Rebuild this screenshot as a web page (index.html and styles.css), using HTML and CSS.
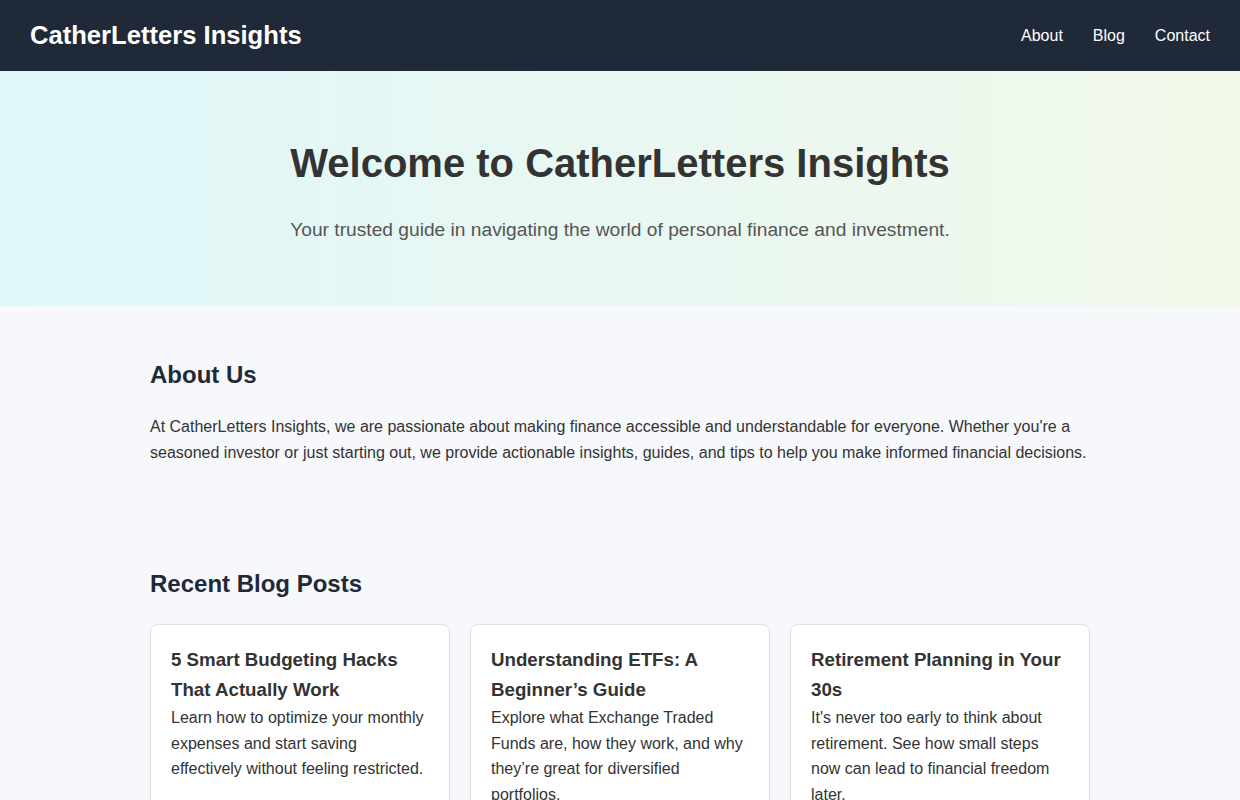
FILE: index.html
```html
<!DOCTYPE html>
<html lang="en">
<head>
<meta charset="utf-8">
<title>CatherLetters Insights</title>
<link rel="stylesheet" href="styles.css">
</head>
<body>
<header class="site-header">
  <div class="logo">CatherLetters Insights</div>
  <nav class="nav">
    <a href="#about">About</a>
    <a href="#blog">Blog</a>
    <a href="#contact">Contact</a>
  </nav>
</header>
<section class="hero">
  <h1>Welcome to CatherLetters Insights</h1>
  <p>Your trusted guide in navigating the world of personal finance and investment.</p>
</section>
<main class="container">
  <section class="about" id="about">
    <h2>About Us</h2>
    <p>At CatherLetters Insights, we are passionate about making finance accessible and understandable for everyone. Whether you're a seasoned investor or just starting out, we provide actionable insights, guides, and tips to help you make informed financial decisions.</p>
  </section>
  <section class="blog" id="blog">
    <h2>Recent Blog Posts</h2>
    <div class="cards">
      <article class="card">
        <h3>5 Smart Budgeting Hacks That Actually Work</h3>
        <p>Learn how to optimize your monthly expenses and start saving effectively without feeling restricted.</p>
      </article>
      <article class="card">
        <h3>Understanding ETFs: A Beginner’s Guide</h3>
        <p>Explore what Exchange Traded Funds are, how they work, and why they’re great for diversified portfolios.</p>
      </article>
      <article class="card">
        <h3>Retirement Planning in Your 30s</h3>
        <p>It's never too early to think about retirement. See how small steps now can lead to financial freedom later.</p>
      </article>
    </div>
  </section>
</main>
</body>
</html>
```
FILE: styles.css
```css
* { box-sizing: border-box; }
body {
  margin: 0;
  font-family: "Liberation Sans", Arial, sans-serif;
  font-size: 16px;
  line-height: 1.6;
  color: #333;
  background: #f7f8fb;
}
.site-header {
  height: 71px;
  background: #1f2937;
  display: flex;
  align-items: center;
  justify-content: space-between;
  padding: 0 30px;
}
.logo {
  color: #fff;
  font-size: 25.6px;
  font-weight: bold;
}
.nav {
  display: flex;
  gap: 30px;
}
.nav a {
  color: #fff;
  text-decoration: none;
  font-size: 16px;
}
.hero {
  height: 235px;
  background: linear-gradient(90deg, #e0f7fa, #f1f8e9);
  text-align: center;
  padding-top: 69px;
}
.hero h1 {
  margin: 0;
  font-size: 40px;
  line-height: 46px;
  color: #333;
}
.hero p {
  margin: 32px 0 0;
  font-size: 19.2px;
  line-height: 23px;
  color: #555;
}
.container {
  width: 940px;
  margin: 0 auto;
}
.about {
  padding-top: 55px;
}
h2 {
  margin: 0;
  font-size: 24px;
  line-height: 28px;
  color: #1f2937;
}
.about p {
  margin: 25px 0 0;
  line-height: 26px;
}
.blog {
  padding-top: 104px;
}
.cards {
  margin-top: 26px;
  display: grid;
  grid-template-columns: repeat(3, 1fr);
  gap: 20px;
}
.card {
  background: #fff;
  border: 1px solid #dde1e6;
  border-radius: 8px;
  padding: 20px;
  min-height: 200px;
}
.card h3 {
  margin: 0;
  font-size: 18.72px;
  line-height: 30px;
  color: #333;
}
.card p {
  margin: 0;
  line-height: 25.6px;
}
```
